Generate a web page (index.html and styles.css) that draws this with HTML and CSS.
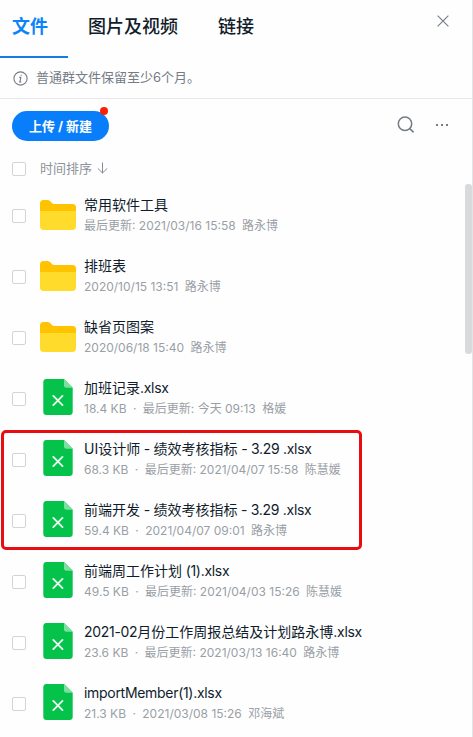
FILE: index.html
```html
<!DOCTYPE html>
<html lang="zh-CN">
<head>
<meta charset="utf-8">
<title>文件</title>
<link rel="stylesheet" href="styles.css">
</head>
<body>
<svg class="defs" aria-hidden="true">
  <symbol id="folder" viewBox="0 0 36 30">
    <path fill="#ffc300" d="M0 3.500A3.500 3.500 0 0 1 3.500 0H7.500C11 0 11.200 4 14.500 4H32.500A3.500 3.500 0 0 1 36 7.500V15H0Z"/>
    <path fill="#ffdc2b" d="M0 11H36V26.200A3.800 3.800 0 0 1 32.200 30H3.800A3.800 3.800 0 0 1 0 26.200Z"/>
  </symbol>
  <symbol id="sheet" viewBox="0 0 30 36">
    <path fill="#05c24a" d="M3.300 0H21L29.700 8.700V32.700A3.300 3.300 0 0 1 26.400 36H3.600A3.300 3.300 0 0 1 .3 32.700V3.300A3.300 3.300 0 0 1 3.300 0Z"/>
    <path fill="#79e09e" d="M21 0L29.700 8.700H23.500A2.500 2.500 0 0 1 21 6.200Z"/>
    <path fill="none" stroke="#e9fff0" stroke-width="1.900" stroke-linecap="round" d="M10.300 16.900L19.500 26.100M19.500 16.900L10.300 26.100"/>
  </symbol>
</svg>
<main class="panel">
  <header class="header">
    <nav class="tabs">
      <a class="tab active">文件</a>
      <a class="tab">图片及视频</a>
      <a class="tab">链接</a>
    </nav>
    <svg class="close" width="12" height="12" viewBox="0 0 12 12"><path d="M.6.6L11.400 11.400M11.400.6L.6 11.400"/></svg>
  </header>
  <div class="notice">
    <svg width="15" height="15" viewBox="0 0 15 15"><circle cx="7.500" cy="7.500" r="6.600"/><path d="M8.300 3.700L8.200 4.700M6.300 6.400H7.800L7 10.800M6 11H8.300"/></svg>
    <span>普通群文件保留至少6个月。</span>
  </div>
  <div class="toolbar">
    <button class="upload">上传 / 新建<i class="dot"></i></button>
    <svg class="search" width="18" height="18" viewBox="0 0 18 18"><circle cx="8" cy="7.800" r="6.700"/><path d="M12.800 12.600L16.600 16.400"/></svg>
    <svg class="more" width="14" height="4" viewBox="0 0 14 4"><path d="M1 1h2v2H1zM6 1h2v2H6zM11 1h2v2h-2z"/></svg>
  </div>
  <div class="sort">
    <span class="check"></span>
    <span class="sort-label">时间排序</span>
    <svg width="11" height="12" viewBox="0 0 11 12"><path d="M5.500.5V11M.8 6.400L5.500 11L10.200 6.400"/></svg>
  </div>
  <section class="list">
    <div class="row"><span class="check"></span><svg class="folder"><use href="#folder"/></svg><div class="info"><div class="name">常用软件工具</div><div class="meta"><span>最后更新: 2021/03/16 15:58</span><span>路永博</span></div></div></div>
    <div class="row"><span class="check"></span><svg class="folder"><use href="#folder"/></svg><div class="info"><div class="name">排班表</div><div class="meta"><span>2020/10/15 13:51</span><span>路永博</span></div></div></div>
    <div class="row"><span class="check"></span><svg class="folder"><use href="#folder"/></svg><div class="info"><div class="name">缺省页图案</div><div class="meta"><span>2020/06/18 15:40</span><span>路永博</span></div></div></div>
    <div class="row"><span class="check"></span><svg class="sheet"><use href="#sheet"/></svg><div class="info"><div class="name">加班记录<span class="en">.xlsx</span></div><div class="meta"><span>18.4 KB</span><span>·</span><span>最后更新: 今天 09:13</span><span>格媛</span></div></div></div>
    <div class="marked">
      <div class="row"><span class="check"></span><svg class="sheet"><use href="#sheet"/></svg><div class="info"><div class="name">UI设计师<span class="en"> - </span>绩效考核指标<span class="en"> - 3.29 .xlsx</span></div><div class="meta"><span>68.3 KB</span><span>·</span><span>最后更新: 2021/04/07 15:58</span><span>陈慧媛</span></div></div></div>
      <div class="row"><span class="check"></span><svg class="sheet"><use href="#sheet"/></svg><div class="info"><div class="name">前端开发<span class="en"> - </span>绩效考核指标<span class="en"> - 3.29 .xlsx</span></div><div class="meta"><span>59.4 KB</span><span>·</span><span>2021/04/07 09:01</span><span>路永博</span></div></div></div>
    </div>
    <div class="row"><span class="check"></span><svg class="sheet"><use href="#sheet"/></svg><div class="info"><div class="name">前端周工作计划<span class="en"> (1).xlsx</span></div><div class="meta"><span>49.5 KB</span><span>·</span><span>最后更新: 2021/04/03 15:26</span><span>陈慧媛</span></div></div></div>
    <div class="row"><span class="check"></span><svg class="sheet"><use href="#sheet"/></svg><div class="info"><div class="name"><span class="en">2021-02</span>月份工作周报总结及计划路永博<span class="en">.xlsx</span></div><div class="meta"><span>23.6 KB</span><span>·</span><span>最后更新: 2021/03/13 16:40</span><span>路永博</span></div></div></div>
    <div class="row"><span class="check"></span><svg class="sheet"><use href="#sheet"/></svg><div class="info"><div class="name"><span class="en">importMember(1).xlsx</span></div><div class="meta"><span>21.3 KB</span><span>·</span><span>2021/03/08 15:26</span><span>邓海斌</span></div></div></div>
  </section>
  <div class="scrollbar"></div>
</main>
</body>
</html>
```

FILE: styles.css
```css
*, *::after { box-sizing: border-box; }
body {
  margin: 0;
  background: #fff;
  color: #101c2b;
  font-family: Inter, "Noto Sans CJK SC", sans-serif;
}
svg { flex: none; fill: none; stroke: #747b84; }
.defs { position: absolute; width: 0; height: 0; }
.panel {
  position: relative;
  width: 473px;
  height: 737px;
  overflow: hidden;
  border-right: 1px solid #e3e4e6;
  background: #fefefe;
}
.header { display: flex; justify-content: space-between; height: 58px; padding-right: 23px; }
.tabs { display: flex; }
.tab {
  height: 58px;
  padding: 0 20px;
  font-size: 18px;
  line-height: 53px;
  font-weight: 500;
  white-space: nowrap;
}
.tab.active {
  padding-left: 12px;
  border-bottom: 2px solid #127ce0;
  color: #0a84f8;
  font-weight: 700;
}
.close { margin-top: 15px; stroke-width: 1.1; }
.notice {
  display: flex;
  align-items: center;
  gap: 8px;
  height: 41px;
  padding-left: 13px;
  border-bottom: 1px solid #e8e9ea;
  color: #747b84;
  font-size: 13px;
  line-height: 20px;
}
.notice svg { stroke-width: 1.1; }
.notice span { padding-bottom: 2px; }
.toolbar { display: flex; align-items: center; height: 54px; padding: 0 23px 0 12px; }
.upload {
  position: relative;
  width: 97px;
  height: 30px;
  padding: 0;
  border: 0;
  border-radius: 15px;
  background: #087efb;
  color: #fff;
  font: 700 13px/30px Inter, "Noto Sans CJK SC", sans-serif;
  white-space: nowrap;
}
.dot {
  position: absolute;
  top: -4px;
  right: 1px;
  width: 8px;
  height: 8px;
  border-radius: 50%;
  background: #fb2008;
}
.search { margin: 0 20px 2px auto; stroke-width: 1.5; }
.more { margin-bottom: 2px; fill: #747b84; stroke: none; }
.sort { display: flex; align-items: center; height: 32px; padding-left: 12px; color: #8d939b; font-size: 13px; }
.sort svg { margin: 0 0 2px 5px; stroke: #858b93; }
.check { flex: none; width: 14px; height: 14px; border: 1px solid #d2d4d7; border-radius: 2px; background: #fff; }
.sort-label { margin-left: 14px; padding-bottom: 2px; line-height: 20px; }
.row { display: flex; align-items: center; height: 61px; padding: 1px 0 0 12px; }
.folder { width: 36px; height: 30px; margin: 0 8px 2px 14px; stroke: none; }
.sheet { width: 30px; height: 36px; margin: 0 11px 4px 17px; stroke: none; }
.info { padding-bottom: 2px; white-space: nowrap; }
.name { font-size: 14px; line-height: 22px; }
.en { letter-spacing: -0.3px; }
.meta { display: flex; gap: 6.4px; color: #9a9fa6; font-size: 12px; line-height: 20px; }
.marked { position: relative; }
.marked::after {
  content: "";
  position: absolute;
  top: 1px;
  left: 1px;
  width: 361px;
  height: 120px;
  border: 3px solid #e80d10;
  border-radius: 5px;
}
.scrollbar {
  position: absolute;
  top: 184px;
  right: 0;
  width: 7px;
  height: 170px;
  border-radius: 3px;
  background: #d9dadc;
}
```
